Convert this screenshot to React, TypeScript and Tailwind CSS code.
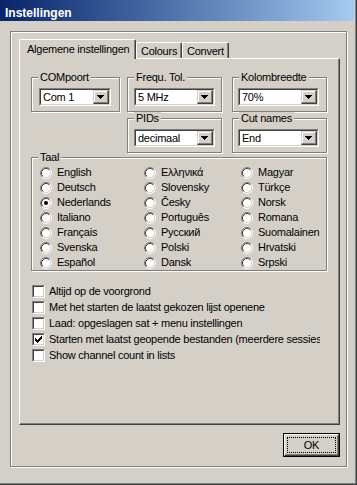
import React from "react";

function Arrow() {
  return (
    <svg width="7" height="4" viewBox="0 0 7 4" shapeRendering="crispEdges">
      <path d="M0 0h7v1H0zM1 1h5v1H1zM2 2h3v1H2zM3 3h1v1H3z" fill="#000" />
    </svg>
  );
}

function Combo({ value, width }: { value: string; width: string }) {
  return (
    <div className={`${width} h-[18px] flex border border-t-[#808080] border-l-[#808080] border-r-white border-b-white`}>
      <div className="flex-1 min-w-0 flex border border-t-[#404040] border-l-[#404040] border-r-[#d4d0c8] border-b-[#d4d0c8] bg-white">
        <div className="flex-1 min-w-0 pl-[2px] pt-[1px] leading-[13px] whitespace-nowrap overflow-hidden">{value}</div>
        <div className="w-[16px] h-[14px] flex border border-t-[#d4d0c8] border-l-[#d4d0c8] border-r-[#404040] border-b-[#404040] bg-[#d4d0c8]">
          <div className="flex-1 flex items-center justify-center border border-t-white border-l-white border-r-[#808080] border-b-[#808080] border-t-0 border-l-0 shadow-[inset_1px_1px_0_#fff]">
            <Arrow />
          </div>
        </div>
      </div>
    </div>
  );
}

function Group({
  label,
  className,
  children,
}: {
  label: string;
  className: string;
  children?: React.ReactNode;
}) {
  return (
    <div className={`relative border border-[#808080] shadow-[inset_1px_1px_0_#fff,1px_1px_0_#fff] ${className}`}>
      <span className="absolute left-[6px] top-[-7px] px-[2px] bg-[#d4d0c8] leading-[13px] whitespace-nowrap">
        {label}
      </span>
      {children}
    </div>
  );
}

function Radio({ checked }: { checked?: boolean }) {
  return (
    <svg width="12" height="12" viewBox="0 0 12 12" className="shrink-0">
      <circle cx="6" cy="6" r="4.5" fill="#fff" />
      <path d="M2.11 9.89 A5.5 5.5 0 0 1 9.89 2.11" stroke="#808080" fill="none" />
      <path d="M9.89 2.11 A5.5 5.5 0 0 1 2.11 9.89" stroke="#fff" fill="none" />
      <path d="M2.82 9.18 A4.5 4.5 0 0 1 9.18 2.82" stroke="#404040" fill="none" />
      <path d="M9.18 2.82 A4.5 4.5 0 0 1 2.82 9.18" stroke="#d4d0c8" fill="none" />
      {checked && <circle cx="6" cy="6" r="2" fill="#000" />}
    </svg>
  );
}

function Check({ checked, label }: { checked?: boolean; label: string }) {
  return (
    <div className="h-[16px] flex items-center">
      <div className="w-[13px] h-[13px] shrink-0 flex border border-t-[#808080] border-l-[#808080] border-r-white border-b-white">
        <div className="flex-1 border border-t-[#404040] border-l-[#404040] border-r-[#d4d0c8] border-b-[#d4d0c8] bg-white">
          {checked && (
            <svg width="9" height="9" viewBox="0 0 9 9" shapeRendering="crispEdges">
              <path
                d="M7 1h1v3H7zM6 2h1v3H6zM5 3h1v3H5zM4 4h1v3H4zM3 5h1v3H3zM2 4h1v3H2zM1 3h1v3H1z"
                fill="#000"
              />
            </svg>
          )}
        </div>
      </div>
      <span className="ml-[4px] leading-[16px] whitespace-nowrap">{label}</span>
    </div>
  );
}

const col1 = ["English", "Deutsch", "Nederlands", "Italiano", "Français", "Svenska", "Español"];
const col2 = ["Ελληνικά", "Slovensky", "Česky", "Português", "Русский", "Polski", "Dansk"];
const col3 = ["Magyar", "Türkçe", "Norsk", "Romana", "Suomalainen", "Hrvatski", "Srpski"];

function RadioCol({ items, width, checked }: { items: string[]; width: string; checked?: string }) {
  return (
    <div className={`${width} flex flex-col`}>
      {items.map((t) => (
        <div key={t} className="h-[15px] flex items-center">
          <Radio checked={t === checked} />
          <span className="ml-[5px] leading-[15px] whitespace-nowrap">{t}</span>
        </div>
      ))}
    </div>
  );
}

export default function App() {
  return (
    <div className="w-[357px] h-[485px] bg-[#d4d0c8] flex flex-col border-r border-b border-r-[#404040] border-b-[#404040] shadow-[inset_-1px_-1px_0_#808080] font-['Liberation_Sans',Arial,sans-serif] text-[11px] tracking-[-0.25px] text-black overflow-hidden">
      {/* Title bar */}
      <div className="h-[21px] mr-[2px] bg-gradient-to-r from-[#0a246a] to-[#a6caf0] pl-[5px] pt-[5px]">
        <span className="text-white font-bold text-[12px] leading-[14px] tracking-normal">Instellingen</span>
      </div>

      {/* Outer etched panel */}
      <div className="ml-[10px] mt-[10px] w-[337px] h-[436px] border border-[#808080] shadow-[inset_1px_1px_0_#fff,1px_1px_0_#fff] pl-[8px] pt-[7px]">
        <div className="w-[321px] flex flex-col">
          {/* Tabs */}
          <div className="h-[19px] flex items-end">
            <div className="relative z-10 w-[117px] h-[20px] -mb-[1px] bg-[#d4d0c8] border-l border-t border-r border-l-white border-t-white border-r-[#404040] rounded-t-[2px] shadow-[inset_-1px_0_0_#808080] pl-[7px] pt-[3px] leading-[13px] whitespace-nowrap">
              Algemene instellingen
            </div>
            <div className="w-[46px] h-[16px] border-l border-t border-r border-l-white border-t-white border-r-[#404040] rounded-t-[2px] shadow-[inset_-1px_0_0_#808080] pl-[4px] pt-[2px] leading-[13px] whitespace-nowrap">
              Colours
            </div>
            <div className="w-[47px] h-[16px] border-l border-t border-r border-l-white border-t-white border-r-[#404040] rounded-t-[2px] shadow-[inset_-1px_0_0_#808080] pl-[4px] pt-[2px] leading-[13px] whitespace-nowrap">
              Convert
            </div>
          </div>

          {/* Tab page */}
          <div className="h-[367px] border border-t-white border-l-white border-r-[#404040] border-b-[#404040] shadow-[inset_-1px_-1px_0_#808080] pl-[11px] pt-[18px] flex flex-col">
            <div className="flex">
              <Group label="COMpoort" className="w-[89px] h-[35px] pl-[7px] pt-[10px]">
                <Combo value="Com 1" width="w-[72px]" />
              </Group>
              <Group label="Frequ. Tol." className="ml-[7px] w-[95px] h-[35px] pl-[6px] pt-[10px]">
                <Combo value="5 MHz" width="w-[81px]" />
              </Group>
              <Group label="Kolombreedte" className="ml-[10px] w-[95px] h-[35px] pl-[5px] pt-[10px]">
                <Combo value="70%" width="w-[81px]" />
              </Group>
            </div>
            <div className="flex mt-[6px] ml-[96px]">
              <Group label="PIDs" className="w-[95px] h-[35px] pl-[6px] pt-[10px]">
                <Combo value="decimaal" width="w-[81px]" />
              </Group>
              <Group label="Cut names" className="ml-[10px] w-[95px] h-[35px] pl-[5px] pt-[10px]">
                <Combo value="End" width="w-[81px]" />
              </Group>
            </div>
            <Group label="Taal" className="mt-[4px] w-[296px] h-[114px] pl-[8px] pt-[7px]">
              <div className="flex">
                <RadioCol items={col1} width="w-[104px]" checked="Nederlands" />
                <RadioCol items={col2} width="w-[97px]" />
                <RadioCol items={col3} width="w-[80px]" />
              </div>
            </Group>
            <div className="mt-[12px] ml-[1px] w-[288px] overflow-hidden flex flex-col">
              <Check label="Altijd op de voorgrond" />
              <Check label="Met het starten de laatst gekozen lijst openene" />
              <Check label="Laad: opgeslagen sat + menu instellingen" />
              <Check checked label="Starten met laatst geopende bestanden (meerdere sessies)" />
              <Check label="Show channel count in lists" />
            </div>
          </div>

          {/* Buttons */}
          <div className="mt-[8px] flex justify-end">
            <div className="w-[57px] h-[24px] border border-black flex">
              <div className="relative flex-1 flex items-center justify-center border border-t-white border-l-white border-r-[#404040] border-b-[#404040] shadow-[inset_-1px_-1px_0_#808080]">
                <div className="absolute left-[2px] top-[2px] right-[2px] bottom-[2px] border border-dotted border-black" />
                <span className="leading-[13px]">OK</span>
              </div>
            </div>
          </div>
        </div>
      </div>
    </div>
  );
}
